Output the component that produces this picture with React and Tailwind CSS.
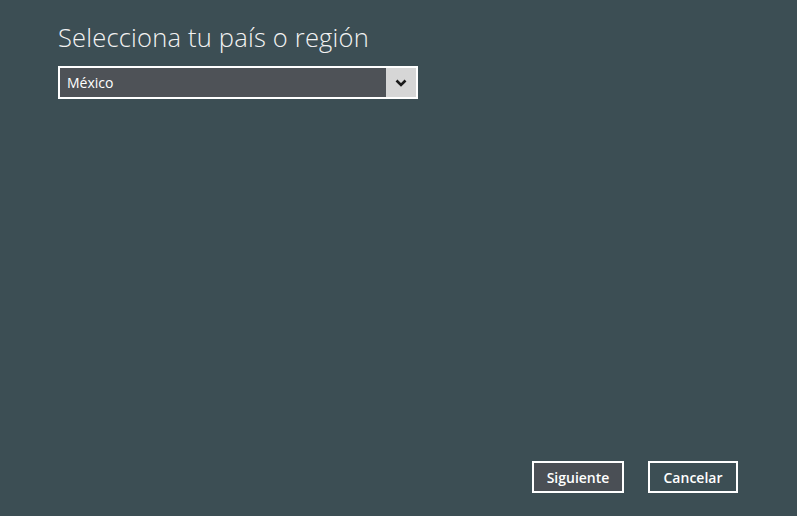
export default function App() {
  return (
    <div
      className="w-[797px] h-[516px] bg-[#3c4e54] flex flex-col justify-between text-white overflow-hidden"
      style={{ fontFamily: '"Open Sans", "Noto Sans", sans-serif' }}
    >
      <div className="pl-[58px] pt-[21px]">
        <h1 className="text-[25.5px] leading-[33px] font-light text-[#f2f2f2] tracking-[0.2px]">Selecciona tu país o región</h1>
        <div className="mt-[12px] w-[360px] h-[33px] border-2 border-white flex">
          <div className="flex-1 bg-[#4e5257] flex items-center pl-[7px] text-[14px] text-white">México</div>
          <div className="w-[30px] bg-[#d6d6d6] flex items-center justify-center">
            <svg width="12" height="8" viewBox="0 0 12 8">
              <path d="M1.5 1.5 L6 6 L10.5 1.5" fill="none" stroke="#1a1a1a" strokeWidth="2.6" />
            </svg>
          </div>
        </div>
      </div>
      <div className="flex justify-end gap-[24px] pr-[59px] pb-[23px]">
        <button className="w-[92px] h-[32px] border-2 border-white bg-[#4a4f55] text-[14px] font-semibold text-white">Siguiente</button>
        <button className="w-[90px] h-[32px] border-2 border-white text-[14px] font-semibold text-white">Cancelar</button>
      </div>
    </div>
  );
}
